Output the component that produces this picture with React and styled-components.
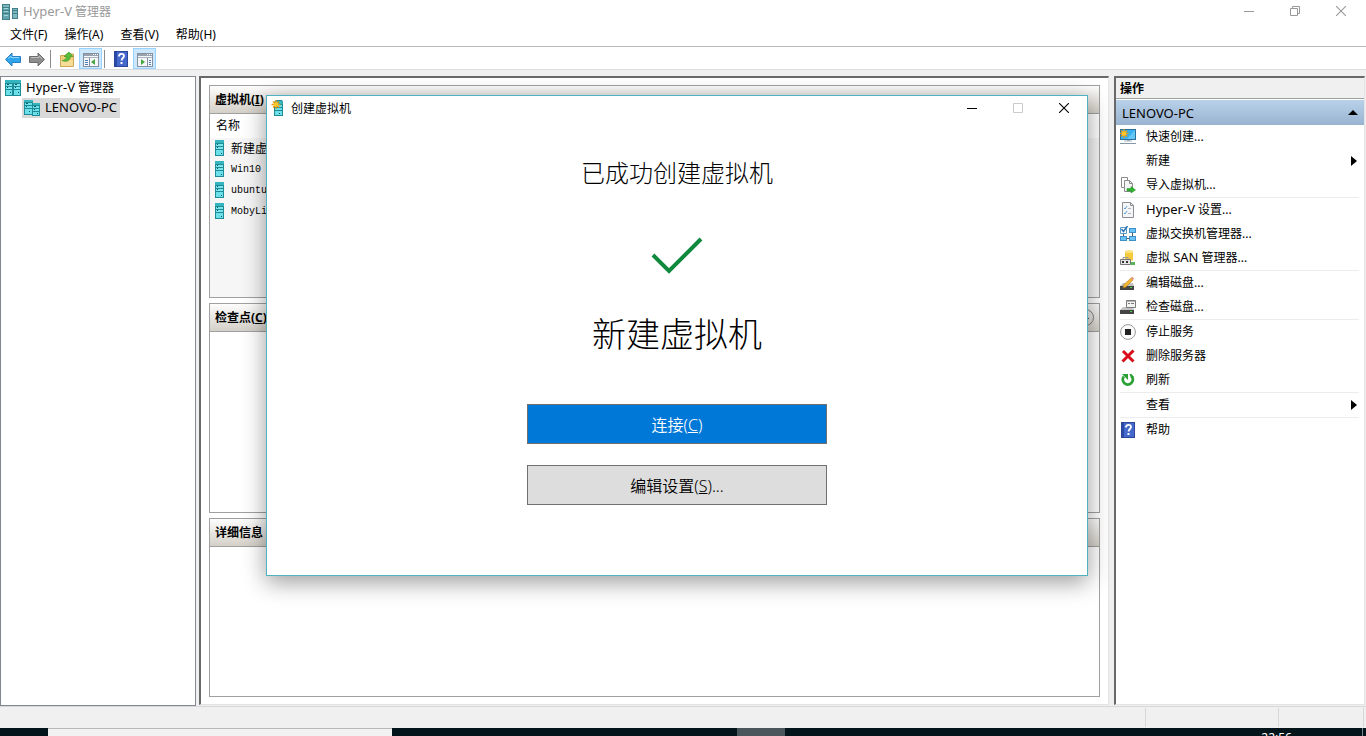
import React from 'react';
import styled, { createGlobalStyle } from 'styled-components';

const GlobalStyle = createGlobalStyle`
	* {
		box-sizing: border-box;
	}
	body {
		margin: 0;
		font-family: 'Noto Sans', 'Noto Sans CJK SC', sans-serif;
		font-size: 12px;
		color: #000;
		overflow: hidden;
	}
	button {
		font: inherit;
		color: inherit;
		border: 0;
		padding: 0;
		background: none;
	}
	svg {
		display: block;
		flex: none;
	}
	ul {
		list-style: none;
		margin: 0;
		padding: 0;
	}
`;

/* ---------- icons ---------- */

const ServerIcon = () => (
	<svg width='10' height='16' viewBox='0 0 10 16'>
		<rect x='0' y='0' width='9' height='16' fill='#1f8c95' />
		<rect x='0' y='0' width='9' height='3' fill='#35b5bf' />
		<rect x='1' y='4' width='7' height='2' fill='#7be4ed' />
		<rect x='1' y='7' width='7' height='2' fill='#7be4ed' />
		<rect x='1' y='10' width='7' height='5' fill='#6be0ea' />
		<path d='M2 4h1v1h-1zM2 7h1v1h-1zM6 13h1v1h-1z' fill='#0d5a61' />
	</svg>
);

const ServersIcon = () => (
	<svg width='16' height='16' viewBox='0 0 16 16'>
		<rect x='0' y='0' width='9' height='15' fill='#1f8c95' />
		<rect x='0' y='0' width='9' height='2' fill='#35b5bf' />
		<path d='M1 3h7v2H1zM1 6h7v2H1zM1 9h7v5H1z' fill='#6be0ea' />
		<rect x='8' y='3' width='8' height='13' fill='#1f8c95' />
		<rect x='9' y='3' width='7' height='2' fill='#35b5bf' />
		<path d='M9 6h6v2H9zM9 9h6v2H9zM9 12h6v3H9z' fill='#6be0ea' />
		<path d='M2 3h2v1h-2zM2 6h1v1h-1zM5 11h1v1h-1zM10 6h2v1h-2zM10 9h1v1h-1zM13 13h1v1h-1z' fill='#0d5a61' />
	</svg>
);

const AppIcon = () => (
	<svg width='16' height='16' viewBox='0 0 16 16'>
		<rect x='0' y='0' width='8' height='16' fill='#437f88' />
		<path d='M1 1h6v2H1z' fill='#7fb9c0' />
		<path d='M1 4h6v2H1zM1 7h6v2H1zM1 10h6v5H1z' fill='#63a5ad' />
		<path d='M2 4h4v1H2zM2 7h4v1H2zM2 11h4v1H2z' fill='#a5d6da' />
		<rect x='10' y='4' width='6' height='11' fill='#437f88' />
		<path d='M11 5h4v1h-4zM11 7h4v2h-4zM11 10h4v4h-4z' fill='#7fb9c0' />
	</svg>
);

const RootIcon = () => (
	<svg width='16' height='16' viewBox='0 0 16 16'>
		<rect width='16' height='16' fill='#1f8c95' />
		<rect width='16' height='3' fill='#35b5bf' />
		<path d='M1 4h6v2h-6zM9 4h6v2h-6zM1 7h6v2h-6zM9 7h6v2h-6z' fill='#7be4ed' />
		<path d='M1 10h6v5h-6zM9 10h6v5h-6z' fill='#6be0ea' />
		<path d='M2 4h2v1h-2zM10 4h2v1h-2zM2 7h1v1h-1zM10 7h1v1h-1zM5 12h1v1h-1zM13 12h1v1h-1z' fill='#0d5a61' />
	</svg>
);

const Spark = () => (
	<g>
		<path d='M4 0v9M-.5 4.500h9M1 1.500l6 6M7 1.500l-6 6' stroke='#e89a12' strokeWidth='1.300' />
		<circle cx='4' cy='4.500' r='2.200' fill='#ffc629' />
	</g>
);

const NewServerIcon = () => (
	<svg width='13' height='17' viewBox='-1 0 13 17'>
		<path d='M2 2l2-2h6l1 2v14H2z' fill='#1f8c95' />
		<path d='M3 1h7l1 3H3z' fill='#35b5bf' />
		<path d='M3 5h7v2H3zM3 8h7v2H3zM3 11h7v4H3z' fill='#6be0ea' />
		<rect x='7' y='13' width='1' height='1' fill='#0d5a61' />
		<Spark />
	</svg>
);

const ArrowIcon = ({ back }) => (
	<svg width='16' height='16' viewBox='0 0 16 16'>
		<path
			d={back ? 'M.5 8.500L7 2v3.500h8.500v6H7V15z' : 'M15.500 8.500L9 2v3.500H.5v6H9V15z'}
			fill={back ? '#2fa4ea' : '#8d8d8d'}
			stroke={back ? '#2a7fc0' : '#6c6c6c'}
		/>
		<path d={back ? 'M3 7.500l3-2.500v1.500h8' : 'M13 7.500l-3-2.500v1.500H2'} fill='none' stroke={back ? '#8fd6fb' : '#bdbdbd'} />
	</svg>
);

const FolderIcon = () => (
	<svg width='16' height='16' viewBox='0 0 16 16'>
		<path d='M1.500 4.500h5l1-1.500h7v12.500h-13z' fill='#f0cd78' stroke='#cda756' />
		<path d='M2 9h12v6H2z' fill='#f6dc94' />
		<path d='M3 9.500c3 0 4-1.500 4.500-4H5L10 1l4 4.500h-2.500c-.5 4-3.500 6-8.500 4z' fill='#55bf3c' stroke='#2f8e22' strokeWidth='.6' />
	</svg>
);

const PaneIcon = ({ right }) => (
	<svg width='18' height='16' viewBox='0 0 18 16'>
		<rect x='1.500' y='2.500' width='15' height='13' fill='#f5f7fa' stroke='#8490a0' />
		<path d='M2 3h14v2H2z' fill='#98a3b2' />
		<path d='M11 3.500h1M13 3.500h1M15 3.500h1' stroke='#fff' />
		<path d='M2 6.500h14' stroke='#aab4c0' />
		<path d={right ? 'M11.500 7v8' : 'M7.500 7v8'} stroke='#8490a0' />
		<path d={right ? 'M13 9.500h2M13 11.500h2M13 13.500h2' : 'M3 9.500h3M3 11.500h3M3 13.500h3'} stroke='#4d7fb5' />
		<path d={right ? 'M5 8l4 3-4 3z' : 'M13 8l-4 3 4 3z'} fill='#46a83e' />
	</svg>
);

const HelpIcon = () => (
	<svg width='14' height='16' viewBox='0 0 14 16'>
		<rect x='.5' y='.5' width='13' height='15' fill='#4468cc' stroke='#2c479a' />
		<path d='M1 1h2v14H1z' fill='#2a4aa6' />
		<path d='M5 5.500c0-3.500 5-3.500 5-.5 0 2-2.400 2-2.400 4.500' fill='none' stroke='#fff' strokeWidth='1.800' />
		<rect x='6.500' y='11' width='2' height='2' fill='#fff' />
	</svg>
);

const MonitorIcon = () => (
	<svg width='16' height='16' viewBox='0 0 16 16'>
		<rect x='.5' y='.5' width='15' height='10' fill='#38b1ee' stroke='#286f9c' />
		<path d='M7 10l8-9v9z' fill='#65c8f7' />
		<path d='M7 11h3v1H7z' fill='#a7b5c1' />
		<path d='M4 12h8' stroke='#a7b5c1' />
		<path d='M0 14.500h16' stroke='#8497a8' />
		<Spark />
	</svg>
);

const ImportIcon = () => (
	<svg width='16' height='16' viewBox='0 0 16 16'>
		<path d='M1.500.500h6v10h-6z' fill='#fff' stroke='#8a8a8a' />
		<path d='M4.500 3.500h5l3 3v8h-8z' fill='#f5f5f5' stroke='#8a8a8a' />
		<path d='M9.500 3.500v3h3' fill='none' stroke='#8a8a8a' />
		<path d='M7 11.500h4V9.500l4.500 3.500-4.500 3v-2H7z' fill='#31b431' stroke='#17861b' strokeWidth='.5' />
	</svg>
);

const SettingsIcon = () => (
	<svg width='16' height='16' viewBox='0 0 16 16'>
		<path d='M2.500.500h8l3 3v12h-11z' fill='#f4f5f6' stroke='#8b8f94' />
		<path d='M10.500.500v3h3' fill='none' stroke='#8b8f94' />
		<path d='M4 6l1 1 2-3M4 11l1 1 2-3' fill='none' stroke='#5b9fd6' />
		<path d='M8 6.500h3M8 11.500h3' stroke='#b0b3b7' />
	</svg>
);

const SwitchIcon = () => (
	<svg width='16' height='16' viewBox='0 0 16 16'>
		<path d='M3.500 6v4M12.500 6v4M6 12.500h4' stroke='#4b5a66' />
		<path d='M.5 1.500h6v6h-6z' fill='#fff' stroke='#5a9ac6' />
		<path d='M9 2h7v5H9zM0 10h7v5H0zM9 10h7v5H9z' fill='#3f8fc8' />
		<path d='M10 3h5v3h-5zM1 11h5v3H1zM10 11h5v3h-5z' fill='#6cc4f5' />
		<path d='M1.500 3l2 2.500L7.500 0' fill='none' stroke='#2a73b5' strokeWidth='1.500' />
	</svg>
);

const SanIcon = () => (
	<svg width='16' height='16' viewBox='0 0 16 16'>
		<path d='M5 1.500v9h8v-9z' fill='#f3cb3d' />
		<ellipse cx='9' cy='1.500' rx='4' ry='1.500' fill='#fce483' />
		<path d='M.5 9.500h10v5H.5z' fill='#e5e5e5' stroke='#777' />
		<path d='M3 9V7.500h5V9' fill='none' stroke='#999' />
		<path d='M2 11h2v2H2zM6 11h2v2H6z' fill='#333' />
		<path d='M11 12h4v3h-4z' fill='#58b458' />
	</svg>
);

const DriveShape = () => (
	<g>
		<path d='M3 8h10l1 3H0z' fill='#c2c2c2' />
		<path d='M0 11h14v4H0z' fill='#444' />
		<path d='M10 12h2v1h-2z' fill='#42d742' />
	</g>
);

const EditDiskIcon = () => (
	<svg width='16' height='16' viewBox='0 0 16 16'>
		<DriveShape />
		<path d='M3 13l1-3.500 7-6.500 2 2-7 7z' fill='#f4b632' stroke='#a97416' strokeWidth='.5' />
		<path d='M11 3l1-1.500 2 2L13 5z' fill='#e28f86' />
	</svg>
);

const InspectDiskIcon = () => (
	<svg width='16' height='16' viewBox='0 0 16 16'>
		<DriveShape />
		<path d='M6.500 1.500h9v7h-9z' fill='#f4f4f4' stroke='#7b7b7b' />
		<path d='M7 2h8v1H7z' fill='#b5b5b5' />
		<path d='M8 4.500h2M11 4.500h3' stroke='#777' />
	</svg>
);

const StopIcon = () => (
	<svg width='16' height='16' viewBox='0 0 16 16'>
		<circle cx='8' cy='8' r='7.400' fill='#fafafa' stroke='#9a9a9a' />
		<rect x='5' y='5' width='6' height='6' fill='#222' />
	</svg>
);

const DeleteIcon = () => (
	<svg width='16' height='16' viewBox='0 0 16 16'>
		<path d='M3 3l10.500 10.500M13.500 2.500L2.500 13.500' stroke='#d9101c' strokeWidth='3' />
	</svg>
);

const RefreshIcon = () => (
	<svg width='16' height='16' viewBox='0 0 16 16'>
		<path d='M3.800 4.500a5 5 0 1 0 8 0' fill='none' stroke='#28a032' strokeWidth='2.800' />
		<path d='M2 2h6v6z' fill='#28a032' />
		<path d='M9.500 2h2l2.500 3-3 1z' fill='#28a032' />
	</svg>
);

const MinimizeGlyph = () => (
	<svg width='10' height='10' viewBox='0 0 10 10'>
		<path d='M0 5.500h10' stroke='currentColor' />
	</svg>
);

const MaximizeGlyph = () => (
	<svg width='10' height='10' viewBox='0 0 10 10'>
		<path d='M.5.500h9v9h-9z' fill='none' stroke='currentColor' />
	</svg>
);

const RestoreGlyph = () => (
	<svg width='10' height='10' viewBox='0 0 10 10'>
		<path d='M.5 2.500h7v7h-7zM2.500 2.500v-2h7v7h-2' fill='none' stroke='currentColor' />
	</svg>
);

const CloseGlyph = () => (
	<svg width='10' height='10' viewBox='0 0 10 10'>
		<path d='M0 0l10 10M10 0L0 10' stroke='currentColor' strokeWidth='1.100' />
	</svg>
);

const TriangleRight = () => (
	<svg width='6' height='10' viewBox='0 0 6 10'>
		<path d='M0 0l6 5-6 5z' />
	</svg>
);

const TriangleUp = () => (
	<svg width='10' height='5' viewBox='0 0 10 5'>
		<path d='M5 0l5 5H0z' />
	</svg>
);

/* Latin words run one size up beside the Chinese text */
const Latin = styled.span`
	font-size: 13px;
	line-height: 16px;
`;

/* ---------- data ---------- */

const menus = [
	['文件', 'F'],
	['操作', 'A'],
	['查看', 'V'],
	['帮助', 'H'],
];

const machines = ['新建虚拟机', 'Win10', 'ubuntu', 'MobyLinuxVM'];

const actionGroups = [
	[
		{ id: 'quick', label: '快速创建...', icon: <MonitorIcon /> },
		{ id: 'new', label: '新建', more: true },
		{ id: 'import', label: '导入虚拟机...', icon: <ImportIcon /> },
	],
	[
		{
			id: 'settings',
			label: (
				<>
					<Latin>Hyper-V</Latin> 设置...
				</>
			),
			icon: <SettingsIcon />,
		},
		{ id: 'switch', label: '虚拟交换机管理器...', icon: <SwitchIcon /> },
		{
			id: 'san',
			label: (
				<>
					虚拟 <Latin>SAN</Latin> 管理器...
				</>
			),
			icon: <SanIcon />,
		},
	],
	[
		{ id: 'edit', label: '编辑磁盘...', icon: <EditDiskIcon /> },
		{ id: 'inspect', label: '检查磁盘...', icon: <InspectDiskIcon /> },
	],
	[
		{ id: 'stop', label: '停止服务', icon: <StopIcon /> },
		{ id: 'remove', label: '删除服务器', icon: <DeleteIcon /> },
		{ id: 'refresh', label: '刷新', icon: <RefreshIcon /> },
	],
	[{ id: 'view', label: '查看', more: true }],
	[{ id: 'help', label: '帮助', icon: <HelpIcon /> }],
];

export default function App() {
	return (
		<>
			<GlobalStyle />
			<Desktop>
				<TitleBar>
					<AppIcon />
					<Title>
						<Latin>Hyper-V</Latin> 管理器
					</Title>
					<WindowButton aria-label='最小化'>
						<MinimizeGlyph />
					</WindowButton>
					<WindowButton aria-label='还原'>
						<RestoreGlyph />
					</WindowButton>
					<WindowButton aria-label='关闭'>
						<CloseGlyph />
					</WindowButton>
				</TitleBar>
				<MenuBar>
					{menus.map(([name, key]) => (
						<button key={key}>
							{name}({key})
						</button>
					))}
				</MenuBar>
				<Toolbar>
					<ToolButton aria-label='后退'>
						<ArrowIcon back />
					</ToolButton>
					<ToolButton aria-label='前进'>
						<ArrowIcon />
					</ToolButton>
					<ToolSeparator />
					<ToolButton aria-label='向上'>
						<FolderIcon />
					</ToolButton>
					<ToolButton aria-label='控制台树' $on>
						<PaneIcon />
					</ToolButton>
					<ToolSeparator />
					<ToolButton aria-label='帮助'>
						<HelpIcon />
					</ToolButton>
					<ToolButton aria-label='操作窗格' $on>
						<PaneIcon right />
					</ToolButton>
				</Toolbar>

				<Workspace>
					<Tree>
						<TreeItem>
							<RootIcon />
							<TreeLabel>
								<Latin>Hyper-V</Latin> 管理器
							</TreeLabel>
						</TreeItem>
						<TreeItem $child>
							<ServersIcon />
							<TreeLabel>
								<Latin>LENOVO-PC</Latin>
							</TreeLabel>
						</TreeItem>
					</Tree>

					<Center>
						<Section $grow={213} $tinted>
							<SectionHeader>
								<h2>
									虚拟机(<u>I</u>)
								</h2>
							</SectionHeader>
							<MachineTable>
								<thead>
									<tr>
										<th>名称</th>
									</tr>
								</thead>
								<tbody>
									{machines.map(name => (
										<tr key={name}>
											<td>
												<Machine>
													<ServerIcon />
													{name}
												</Machine>
											</td>
										</tr>
									))}
								</tbody>
							</MachineTable>
						</Section>
						<Section $grow={210}>
							<SectionHeader>
								<h2>
									检查点(<u>C</u>)
								</h2>
								<Collapse aria-label='折叠'>
									<svg width='6' height='4' viewBox='0 0 6 4'>
										<path d='M3 0l3 4H0z' />
									</svg>
								</Collapse>
							</SectionHeader>
						</Section>
						<Section $grow={179}>
							<SectionHeader>
								<h2>详细信息</h2>
							</SectionHeader>
						</Section>
					</Center>

					<Actions>
						<ActionsTitle>操作</ActionsTitle>
						<ActionsHost>
							<Latin>LENOVO-PC</Latin>
							<TriangleUp />
						</ActionsHost>
						{actionGroups.map((group, i) => (
							<ActionGroup key={i}>
								{group.map(({ id, label, icon, more }) => (
									<li key={id}>
										<Action>
											<IconSlot>{icon}</IconSlot>
											<ActionLabel>{label}</ActionLabel>
											{more && <TriangleRight />}
										</Action>
									</li>
								))}
							</ActionGroup>
						))}
					</Actions>
				</Workspace>

				<StatusBar>
					<i />
					<i />
					<i />
				</StatusBar>
				<Taskbar>
					<SearchBox aria-label='搜索' />
					<TaskButton aria-label='任务' />
					<Clock>22:56</Clock>
				</Taskbar>

				<Dialog role='dialog' aria-labelledby='dialog-title'>
					<DialogBar>
						<NewServerIcon />
						<Title id='dialog-title'>创建虚拟机</Title>
						<WindowButton aria-label='最小化'>
							<MinimizeGlyph />
						</WindowButton>
						<WindowButton aria-label='最大化' disabled>
							<MaximizeGlyph />
						</WindowButton>
						<WindowButton aria-label='关闭'>
							<CloseGlyph />
						</WindowButton>
					</DialogBar>
					<DialogBody>
						<Message>已成功创建虚拟机</Message>
						<svg width='52' height='38' viewBox='0 0 52 38'>
							<path d='M2 18l16 16L50 2' fill='none' stroke='#10893e' strokeWidth='4' />
						</svg>
						<MachineName>新建虚拟机</MachineName>
						<Choices>
							<Choice $primary>
								连接(<u>C</u>)
							</Choice>
							<Choice>
								编辑设置(<u>S</u>)...
							</Choice>
						</Choices>
					</DialogBody>
				</Dialog>
			</Desktop>
		</>
	);
}

/* ---------- window ---------- */

const Desktop = styled.div`
	position: relative;
	display: flex;
	flex-direction: column;
	min-height: 100vh;
	background: #f0f0f0;
`;

const TitleBar = styled.header`
	display: flex;
	align-items: center;
	height: 24px;
	padding: 0 2px;
	background: #fff;
	color: #999;
`;

const Title = styled.span`
	flex: 1;
	padding: 0 0 2px 5px;
`;

const WindowButton = styled.button`
	display: flex;
	align-items: center;
	justify-content: center;
	align-self: stretch;
	width: 46px;
	padding-bottom: 2px;

	&:disabled {
		color: #ccc;
	}
`;

const MenuBar = styled.nav`
	display: flex;
	gap: 17px;
	height: 23px;
	padding: 0 10px 2px;
	background: #fff;
	border-bottom: 1px solid #b9b9b9;
`;

const Toolbar = styled.div`
	display: flex;
	align-items: center;
	gap: 1px;
	height: 23px;
	padding: 1px 1px 0;
	background: #fff;
	border-bottom: 1px solid #dcdcdc;
`;

const ToolButton = styled.button`
	display: flex;
	align-items: center;
	justify-content: center;
	width: 23px;
	height: 21px;
	border: 1px solid ${({ $on }) => ($on ? '#99d1ff' : 'transparent')};
	background: ${({ $on }) => ($on ? '#cce8ff' : 'transparent')};
`;

const ToolSeparator = styled.span`
	width: 1px;
	height: 18px;
	margin: 0 3px 0 1px;
	background: #8c8c8c;
`;

const Workspace = styled.main`
	display: flex;
	flex: 1;
	padding: 6px 1px 0 0;
`;

/* ---------- tree ---------- */

const Tree = styled.ul`
	width: 196px;
	padding: 1px 4px;
	margin-right: 3px;
	background: #fff;
	border: 1px solid #828790;
`;

const TreeItem = styled.li`
	display: flex;
	align-items: center;
	gap: 5px;
	width: max-content;
	height: 20px;
	margin-left: ${({ $child }) => ($child ? '17px' : 0)};
	padding: ${({ $child }) => ($child ? '0 3px 0 2px' : 0)};
	background: ${({ $child }) => ($child ? '#d9d9d9' : 'none')};
`;

const TreeLabel = styled.span`
	padding-bottom: 2px;
`;

/* ---------- sections ---------- */

const Center = styled.div`
	display: flex;
	flex-direction: column;
	flex: 1;
	gap: 5px;
	min-width: 0;
	padding: 7px 8px;
	margin: 0 5px 1px 0;
	background: #fff;
	border: 1px solid #e3e3e3;
	border-top: 2px solid #696969;
	border-left: 2px solid #696969;
`;

const Section = styled.section`
	flex: ${({ $grow }) => $grow} 1 0;
	min-height: 0;
	background: ${({ $tinted }) => ($tinted ? '#f6f6f6' : '#fff')};
	border: 1px solid #a0a0a0;
`;

const SectionHeader = styled.div`
	display: flex;
	align-items: center;
	justify-content: space-between;
	height: 28px;
	padding: 0 5px;
	background: linear-gradient(#fdfdfd, #d4d0c8);
	border-bottom: 1px solid #a0a0a0;

	h2 {
		margin: 0;
		padding-bottom: 1px;
		font-size: 12px;
		font-weight: 700;
	}
`;

const Collapse = styled.button`
	display: flex;
	align-items: center;
	justify-content: center;
	width: 17px;
	height: 17px;
	border: 1px solid #808080;
	border-radius: 50%;
`;

const MachineTable = styled.table`
	width: 100%;
	border-collapse: collapse;

	th {
		height: 24px;
		padding: 0 6px 2px;
		font-weight: 400;
		text-align: left;
		background: #fff;
	}
	td {
		padding: 0 5px;
	}
`;

const Machine = styled.div`
	display: flex;
	align-items: center;
	gap: 6px;
	height: 21px;
	padding-bottom: 1px;
	font-family: 'Liberation Mono', 'Noto Sans CJK SC', monospace;
	font-size: 10px;

	tr:first-child & {
		font-size: 12px;
	}
`;

/* ---------- actions ---------- */

const Actions = styled.aside`
	width: 251px;
	background: #fff;
	margin-bottom: 1px;
	border: 1px solid #e3e3e3;
	border-top: 2px solid #696969;
	border-left: 2px solid #696969;
`;

const ActionsTitle = styled.h2`
	height: 21px;
	margin: 0 0 1px;
	padding: 0 4px;
	font-size: 12px;
	line-height: 21px;
	background: #f0f0f0;
	border-bottom: 1px solid #a0a0a0;
`;

const ActionsHost = styled.div`
	display: flex;
	align-items: center;
	justify-content: space-between;
	height: 25px;
	padding: 0 6px;
	background: linear-gradient(#b9d1ea, #99b4d1);
`;

const ActionGroup = styled.ul`
	margin: 0 5px 0 4px;

	& + & {
		border-top: 1px solid #ececec;
	}
`;

const Action = styled.button`
	display: flex;
	align-items: center;
	gap: 10px;
	width: 100%;
	height: 24px;
	padding-right: 2px;
	text-align: left;
`;

const ActionLabel = styled.span`
	flex: 1;
	padding-bottom: 2px;
`;

const IconSlot = styled.span`
	display: flex;
	justify-content: center;
	width: 16px;
`;

/* ---------- bottom bars ---------- */

const StatusBar = styled.footer`
	display: flex;
	justify-content: flex-end;
	height: 22px;
	padding: 1px 2px 1px 0;
	border-top: 1px solid #d7d7d7;

	i {
		border-right: 1px solid #d7d7d7;
	}
	i:nth-child(2) {
		width: 133px;
	}
	i:nth-child(3) {
		width: 85px;
	}
`;

const Taskbar = styled.div`
	display: flex;
	align-items: flex-start;
	height: 8px;
	padding: 0 3px 0 48px;
	overflow: hidden;
	background: #03151b;
`;

const SearchBox = styled.input`
	width: 344px;
	height: 40px;
	border: 0;
	border-top: 1px solid #b8b8b8;
	background: #f2f2f2;
`;

const TaskButton = styled.button`
	width: 48px;
	height: 40px;
	margin-left: 345px;
	background: #4a565b;
`;

const Clock = styled.time`
	margin-left: auto;
	padding: 0 70px 0 0;
	border-right: 1px solid #7d888c;
	color: #fff;
	line-height: 20px;
`;

/* ---------- dialog ---------- */

const Dialog = styled.div`
	position: absolute;
	top: 95px;
	left: 266px;
	width: 822px;
	background: #fff;
	border: 1px solid #4fb3bf;
	box-shadow: 0 6px 22px rgba(0, 0, 0, 0.4);
`;

const DialogBar = styled.div`
	display: flex;
	align-items: center;
	height: 25px;
	padding-left: 4px;

	svg + span {
		padding-left: 7px;
	}
`;

const DialogBody = styled.div`
	display: flex;
	flex-direction: column;
	align-items: center;
	padding: 36px 0 70px;
`;

const Message = styled.h1`
	margin: 0 0 48px;
	font-size: 24px;
	font-weight: 300;
	line-height: 32px;
`;

const MachineName = styled.p`
	margin: 37px 0 48px;
	font-size: 34px;
	font-weight: 300;
	line-height: 44px;
`;

const Choices = styled.div`
	display: flex;
	flex-direction: column;
	gap: 21px;
	width: 300px;
`;

const Choice = styled.button`
	height: 40px;
	font-size: 16px;
	font-weight: 350;
	border: 1px solid #707070;
	background: ${({ $primary }) => ($primary ? '#0078d7' : '#ddd')};
	color: ${({ $primary }) => ($primary ? '#fff' : '#000')};
`;
